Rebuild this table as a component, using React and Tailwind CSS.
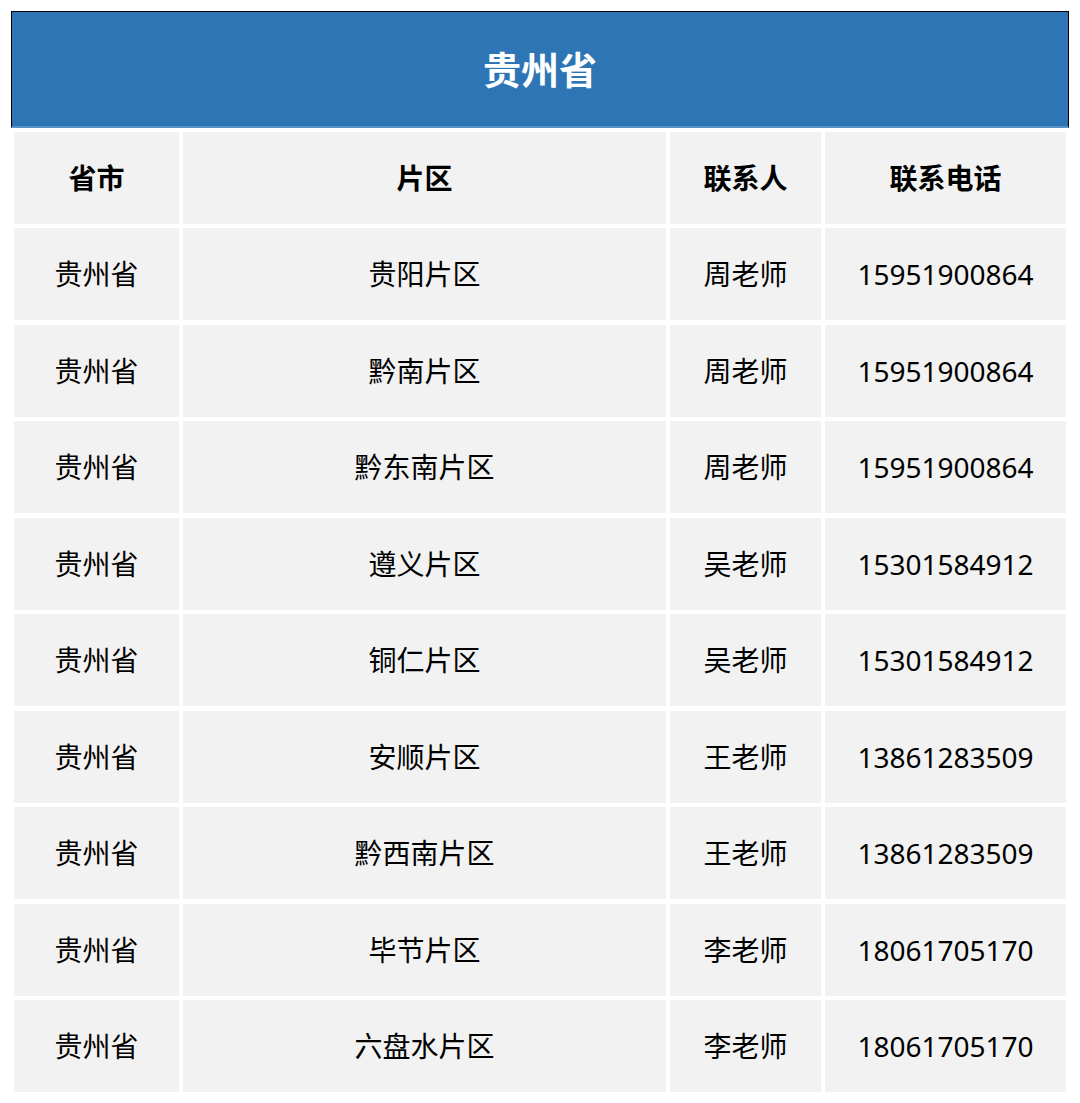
import React from "react";

const rows = [
  ["贵州省", "贵阳片区", "周老师", "15951900864"],
  ["贵州省", "黔南片区", "周老师", "15951900864"],
  ["贵州省", "黔东南片区", "周老师", "15951900864"],
  ["贵州省", "遵义片区", "吴老师", "15301584912"],
  ["贵州省", "铜仁片区", "吴老师", "15301584912"],
  ["贵州省", "安顺片区", "王老师", "13861283509"],
  ["贵州省", "黔西南片区", "王老师", "13861283509"],
  ["贵州省", "毕节片区", "李老师", "18061705170"],
  ["贵州省", "六盘水片区", "李老师", "18061705170"],
];

const headers = ["省市", "片区", "联系人", "联系电话"];

export default function App() {
  return (
    <div className="w-[1080px] h-[1103px] bg-white pt-[11px] px-[11px] font-['Noto_Sans','Noto_Sans_CJK_SC',sans-serif] text-black">
      <div className="w-[1058px] h-[117px] bg-[#2e75b6] border-t border-l border-r border-black border-b-2 border-b-[#5a92c8] flex items-center justify-center">
        <span className="text-white font-bold text-[38px] leading-none">贵州省</span>
      </div>
      <div className="mx-[3px] mt-[4px] grid grid-cols-[165px_483px_151px_241px] gap-x-[4px] gap-y-[4.44px]">
        {headers.map((h) => (
          <div key={h} className="h-[92px] bg-[#f2f2f2] flex items-center justify-center font-bold text-[28px] leading-none">
            {h}
          </div>
        ))}
        {rows.map((r, i) =>
          r.map((c, j) => (
            <div key={i + "-" + j} className="h-[92px] bg-[#f2f2f2] flex items-center justify-center text-[28px] leading-none">
              {c}
            </div>
          ))
        )}
      </div>
    </div>
  );
}
